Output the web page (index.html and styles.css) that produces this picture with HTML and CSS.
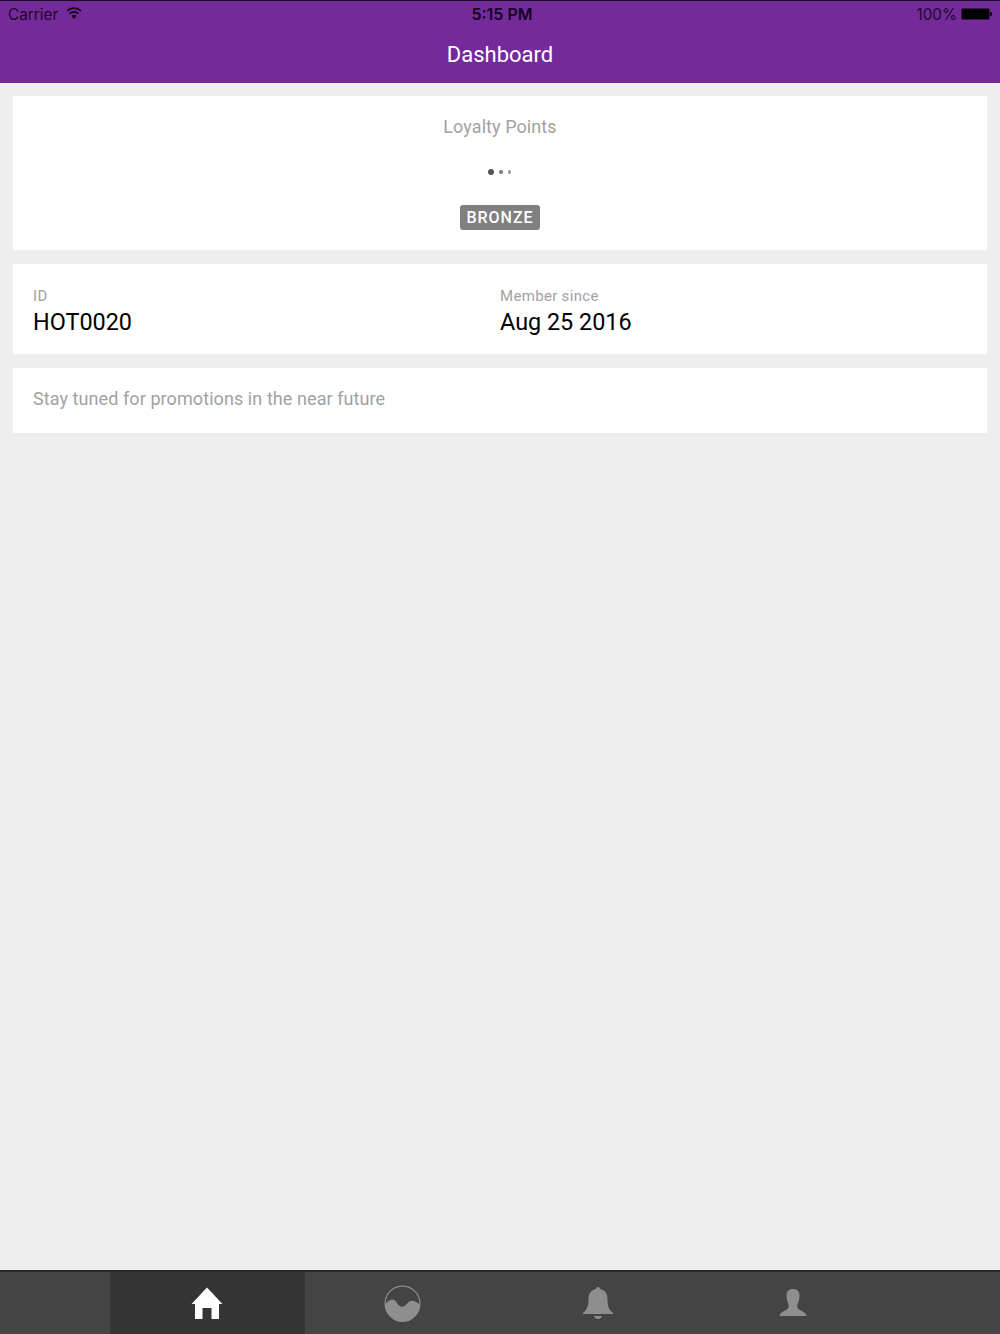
FILE: index.html
```html
<!DOCTYPE html>
<html lang="en">
<head>
    <meta charset="UTF-8">
    <meta name="viewport" content="width=device-width, initial-scale=1.0">
    <title>Dashboard</title>
    <link rel="stylesheet" href="styles.css">
</head>
<body>
    <div class="app">
        <header class="header">
            <div class="status-bar">
                <div class="status-left">
                    <span>Carrier</span>
                    <svg class="wifi" width="16" height="12" viewBox="0 0 16 12">
                        <path d="M8 12 L5.3 8.9 A4 4 0 0 1 10.7 8.9 Z" fill="#14041c"/>
                        <path d="M3.5 6.7 A6.6 6.6 0 0 1 12.5 6.7" fill="none" stroke="#14041c" stroke-width="1.7"/>
                        <path d="M1 3.9 A10.2 10.2 0 0 1 15 3.9" fill="none" stroke="#14041c" stroke-width="1.7"/>
                    </svg>
                </div>
                <div class="status-time">5:15 PM</div>
                <div class="status-right">
                    <span>100%</span>
                    <div class="battery"><div class="battery-fill"></div></div>
                    <div class="battery-tip"></div>
                </div>
            </div>
            <h1 class="title">Dashboard</h1>
        </header>

        <main class="content">
            <section class="card points-card">
                <div class="points-label">Loyalty Points</div>
                <div class="dots">
                    <span class="dot dot-1"></span>
                    <span class="dot dot-2"></span>
                    <span class="dot dot-3"></span>
                </div>
                <span class="tier">BRONZE</span>
            </section>

            <section class="card info-card">
                <div class="info-col">
                    <div class="info-label">ID</div>
                    <div class="info-value">HOT0020</div>
                </div>
                <div class="info-col">
                    <div class="info-label">Member since</div>
                    <div class="info-value">Aug 25 2016</div>
                </div>
            </section>

            <section class="card promo-card">Stay tuned for promotions in the near future</section>
        </main>

        <nav class="tabs">
            <div class="tab active">
                <svg width="32" height="32" viewBox="0 0 32 32">
                    <path d="M16 .5 L31.500 17 L28 17 L28 32 L20.500 32 L20.500 21 L11.500 21 L11.500 32 L4 32 L4 17 L.5 17 Z" fill="#fff"/>
                </svg>
            </div>
            <div class="tab">
                <svg width="37" height="37" viewBox="0 0 38 38">
                    <circle cx="19" cy="19" r="17.900" fill="none" stroke="#8e8e8e" stroke-width="1.2"/>
                    <path d="M1 20 C3 17 6 14.800 9 14.800 C13 14.800 14 22.400 18.500 22.400 C23 22.400 24 16.200 28.500 16.200 C32 16.200 34 18.500 37 20 A18 18 0 0 1 1 20 Z" fill="#8e8e8e"/>
                </svg>
            </div>
            <div class="tab">
                <svg width="32" height="32" viewBox="0 0 32 32">
                    <path d="M16 0 C17.300 0 18 .8 18 2 C23 3 25.500 6.500 25.500 12 C25.500 19 27 23 31 26 L31 27 L1 27 L1 26 C5 23 6.500 19 6.500 12 C6.500 6.500 9 3 14 2 C14 .8 14.700 0 16 0 Z" fill="#8e8e8e"/>
                    <path d="M12 29 L20 29 C19.500 31 18 32 16 32 C14 32 12.500 31 12 29 Z" fill="#8e8e8e"/>
                </svg>
            </div>
            <div class="tab">
                <svg class="person" width="28" height="28" viewBox="0 0 28 28">
                    <path d="M14 0 C18.500 0 20.500 2.500 20.500 7 C20.500 10 19.500 13 18.500 15 C18 18 18.500 19.500 20.500 20.800 C23 22.300 26.500 23 27.500 27 L.5 27 C1.500 23 5 22.300 7.500 20.800 C9.500 19.500 10 18 9.500 15 C8.500 13 7.500 10 7.500 7 C7.500 2.500 9.500 0 14 0 Z" fill="#8e8e8e"/>
                </svg>
            </div>
        </nav>
    </div>
</body>
</html>
```

FILE: styles.css
```css
body {
    margin: 0;
    padding: 0;
    background: #eee;
    font-family: Roboto, Arial, sans-serif;
}

.app {
    display: flex;
    flex-direction: column;
    height: 1334px;
    overflow: hidden;
}

.header {
    height: 83px;
    background: #752a9c;
    border-top: 1px solid #1c0c28;
    box-sizing: border-box;
    flex-shrink: 0;
}

.status-bar {
    display: grid;
    grid-template-columns: 1fr auto 1fr;
    align-items: center;
    height: 26px;
    padding: 0 8px;
    font-family: Inter, Arial, sans-serif;
    font-size: 15.3px;
    color: #1e0829;
}

.status-left {
    display: flex;
    align-items: center;
    gap: 8px;
}

.wifi {
    margin-top: -3px;
}

.status-time {
    font-size: 16px;
    font-weight: 600;
    color: #14041c;
    padding-left: 4px;
}

.status-right {
    display: flex;
    align-items: center;
    justify-content: flex-end;
}

.battery {
    width: 29px;
    height: 12px;
    margin-left: 4px;
    box-sizing: border-box;
    border: 1px solid #3a1650;
    border-radius: 2px;
}

.battery-fill {
    height: 100%;
    background: #000;
}

.battery-tip {
    width: 2px;
    height: 4px;
    background: #14041c;
    border-radius: 0 1px 1px 0;
}

.title {
    margin: 0;
    text-align: center;
    font-size: 22px;
    font-weight: 400;
    line-height: 55px;
    color: #fff;
}

.content {
    flex: 1;
    display: flex;
    flex-direction: column;
    gap: 14px;
    padding: 13px 13px 0;
}

.card {
    background: #fff;
}

.points-card {
    height: 154px;
    display: flex;
    flex-direction: column;
    align-items: center;
}

.points-label {
    margin-top: 19px;
    font-size: 18px;
    letter-spacing: .08px;
    line-height: 24px;
    color: #a2a2a2;
}

.dots {
    display: flex;
    align-items: center;
    gap: 5px;
    height: 10px;
    margin-top: 28px;
    padding-right: 1px;
}

.dot {
    border-radius: 50%;
}

.dot-1 {
    width: 6px;
    height: 6px;
    background: #555;
}

.dot-2 {
    width: 4px;
    height: 4px;
    background: #777;
}

.dot-3 {
    width: 3.5px;
    height: 3.5px;
    background: #999;
}

.tier {
    margin-top: 28px;
    padding: 0 6px;
    height: 25px;
    line-height: 25px;
    background: #808080;
    border-radius: 3px;
    color: #fff;
    font-size: 16px;
    font-weight: 500;
    letter-spacing: 1px;
}

.info-card {
    height: 90px;
    display: grid;
    grid-template-columns: 1fr 1fr;
    padding: 22px 20px 0;
    box-sizing: border-box;
}

.info-label {
    font-size: 15px;
    letter-spacing: .32px;
    line-height: 20px;
    color: #a2a2a2;
}

.info-value {
    font-size: 23.4px;
    line-height: 32px;
    color: #000;
}

.promo-card {
    height: 65px;
    padding: 0 20px;
    line-height: 62px;
    font-size: 18px;
    letter-spacing: .08px;
    color: #a2a2a2;
}

.tabs {
    flex-shrink: 0;
    height: 64px;
    display: flex;
    justify-content: center;
    box-sizing: border-box;
    background: #444;
    border-top: 2px solid #2c2c2c;
}

.tab {
    width: 195.25px;
    display: flex;
    align-items: center;
    justify-content: center;
}

.tab.active {
    background: #353535;
}
```
